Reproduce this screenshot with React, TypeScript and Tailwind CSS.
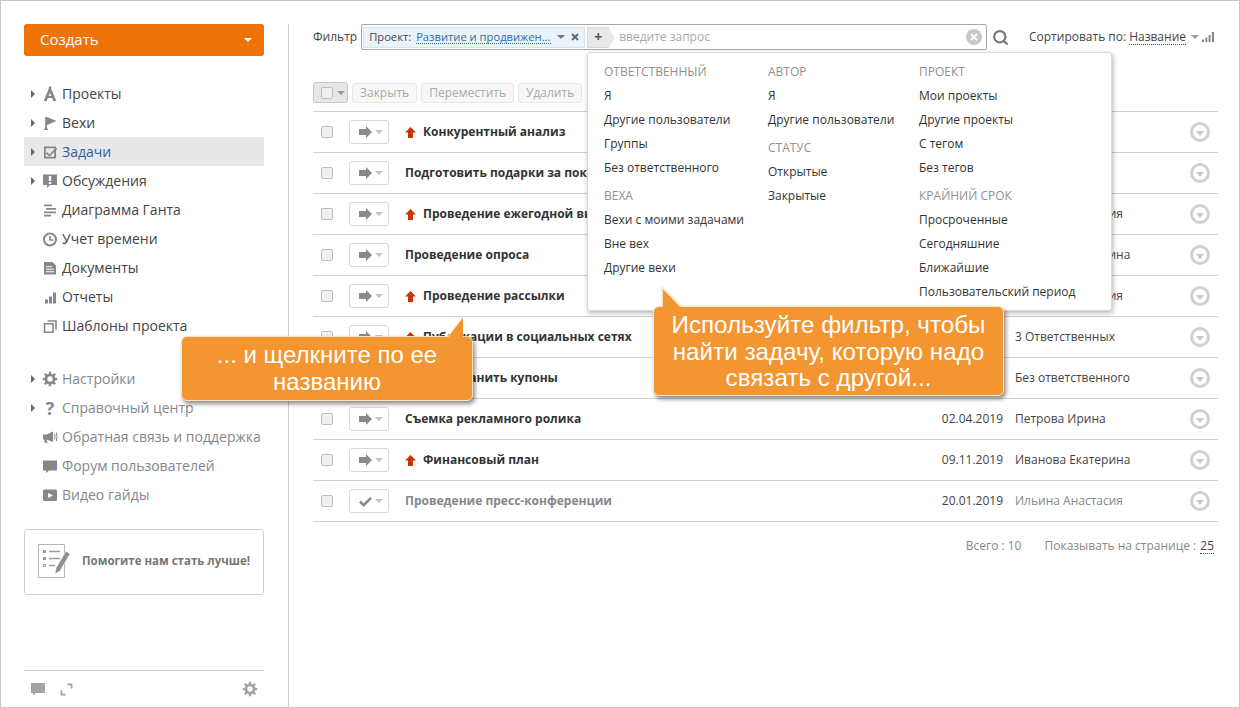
import { Search } from "lucide-react";

type Task = { name: string; up?: boolean; date?: string; who?: string; done?: boolean };

const tasks: Task[] = [
  { name: "Конкурентный анализ", up: true },
  { name: "Подготовить подарки за покупку" },
  { name: "Проведение ежегодной выставки", up: true, who: "Ильина Анастасия" },
  { name: "Проведение опроса", who: "Иванова Екатерина" },
  { name: "Проведение рассылки", up: true, who: "Ильина Анастасия" },
  { name: "Публикации в социальных сетях", up: true, who: "3 Ответственных" },
  { name: "Распространить купоны", who: "Без ответственного" },
  { name: "Съемка рекламного ролика", date: "02.04.2019", who: "Петрова Ирина" },
  { name: "Финансовый план", up: true, date: "09.11.2019", who: "Иванова Екатерина" },
  { name: "Проведение пресс-конференции", date: "20.01.2019", who: "Ильина Анастасия", done: true },
];

function NavIcon({ name }: { name: string }) {
  const c = "#83888d";
  const cls = "w-4 h-4 shrink-0";
  switch (name) {
    case "compass":
      return <svg viewBox="0 0 16 16" className={cls}><path d="M6.800 0.500h2.400v2.300l5 11.700-2.600 1-3.600-8.700-3.600 8.700-2.600-1 5-11.700z" fill={c} /><path d="M5 10h6l.8 2H4.200z" fill={c} /></svg>;
    case "flag":
      return <svg viewBox="0 0 16 16" className={cls}><path d="M3.200 2h1.800l9.500 4L5 10v3.300L6.500 15h-5L3.200 13.300z" fill={c} /></svg>;
    case "check":
      return <svg viewBox="0 0 16 16" className={cls}><path fillRule="evenodd" d="M2 2.500h12v12H2zM3.800 4.300v8.400h8.400V4.300z" fill={c} /><path d="M5 8l2.400 2.400L14 3.800l1.200 1.300-7.800 7.700L3.800 9.200z" fill={c} /></svg>;
    case "talk":
      return <svg viewBox="0 0 16 16" className={cls}><path fillRule="evenodd" d="M1 1.500h14v10.500H8l-3 3v-3H1zM6.800 3v5h2.400V3zM6.800 9v2h2.400V9z" fill={c} /></svg>;
    case "gantt":
      return <svg viewBox="0 0 16 16" className={cls}><path d="M2 2.500h8v1.800H2zM4 6h10v1.800H4zM2 9.500h12v1.800H2zM2 12.800h7v1.700H2z" fill={c} /></svg>;
    case "clock":
      return <svg viewBox="0 0 16 16" className={cls}><circle cx="8" cy="8.500" r="6" fill="none" stroke={c} strokeWidth="2" /><path d="M8 5V9h3.500" fill="none" stroke={c} strokeWidth="1.700" /></svg>;
    case "doc":
      return <svg viewBox="0 0 16 16" className={cls}><path fillRule="evenodd" d="M2 2h8.500L14 5.500V14.500H2zM4 6.200v1h6v-1zM4 8.700v1h8v-1zM4 11.200v1h8v-1z" fill={c} /></svg>;
    case "bars":
      return <svg viewBox="0 0 16 16" className={cls}><path d="M3 10.500h3v4H3zM7 7.500h3v7H7zM11 3.500h3v11h-3z" fill={c} /></svg>;
    case "copy":
      return <svg viewBox="0 0 16 16" className={cls}><path d="M5.500 3h8.500v8.500M2.500 5.800h8.500v8.500H2.500z" fill="none" stroke={c} strokeWidth="1.600" /></svg>;
    case "gear":
      return <Gear color={c} />;
    case "help":
      return <span className="w-4 text-center text-[18px] leading-4 font-bold text-[#83888d] shrink-0">?</span>;
    case "horn":
      return <svg viewBox="0 0 16 16" className={cls}><path d="M1 5.500h3.500L11 2.500v10.500L4.500 10.500l1 3.500H3l-1-3.500H1z" fill={c} /><path d="M12.500 5q1 2.700 0 5.500M14.300 3.500q1.300 4.200 0 8.500" fill="none" stroke={c} strokeWidth="1" /></svg>;
    case "bubble":
      return <svg viewBox="0 0 16 16" className={cls}><path d="M1 2.500h14V12.500H7l-3 2.500v-2.500H1z" fill={c} /></svg>;
    case "video":
      return <svg viewBox="0 0 16 16" className={cls}><path fillRule="evenodd" d="M2.500 2.500h11A1.500 1.500 0 0115 4v8.500a1.500 1.500 0 01-1.500 1.500h-11A1.500 1.500 0 011 12.500V4a1.500 1.500 0 011.500-1.500zM6 6v5l5-2.500z" fill={c} /></svg>;
    default:
      return <span className={cls} />;
  }
}

function Gear({ color, size = 16 }: { color: string; size?: number }) {
  return (
    <svg viewBox="0 0 16 16" width={size} height={size} className="shrink-0">
      <circle cx="8" cy="8" r="4" fill="none" stroke={color} strokeWidth="2.600" />
      <path d="M6.800 .8h2.400v2.700H6.800zM6.800 12.500h2.400v2.700H6.800zM.8 6.800h2.700v2.400H.8zM12.500 6.800h2.700v2.400h-2.700zM2 3.500L3.500 2l2.200 2L4 5.700zM14 3.500L12.500 2l-2.200 2L12 5.700zM2 12.500L3.500 14l2.200-2L4 10.300zM14 12.500L12.500 14l-2.200-2L12 10.300z" fill={color} />
    </svg>
  );
}

function NavRow({ icon, label, caret, active, muted }: { icon: string; label: string; caret?: boolean; active?: boolean; muted?: boolean }) {
  return (
    <div className={`h-[29px] flex items-center ${active ? "bg-[#e8e8e8]" : ""}`}>
      <span className="w-[6px] ml-[7px] mr-[5px] shrink-0">
        {caret && <span className="block w-0 h-0 border-y-[4px] border-y-transparent border-l-[4px] border-l-[#666]" />}
      </span>
      <NavIcon name={icon} />
      <span className={`ml-[4px] text-[14px] whitespace-nowrap ${active ? "text-[#2f5f9e]" : muted ? "text-[#83888d]" : "text-[#444]"}`}>{label}</span>
    </div>
  );
}

function ToolBtn({ label }: { label: string }) {
  return <div className="h-5 px-[7px] flex items-center text-[12px] text-[#a9a9a9] bg-[#f7f7f7] border border-[#e6e6e6] rounded-[3px]">{label}</div>;
}

function Check() {
  return <span className="block w-3 h-3 bg-[#f0f0f0] border border-[#bdbdbd] rounded-[2px] shrink-0" />;
}

function TaskRow({ t }: { t: Task }) {
  return (
    <div className="h-[41px] border-b border-[#d1d1d1] flex items-center">
      <span className="ml-2 mr-4"><Check /></span>
      <div className="w-10 h-[24px] border border-[#d8d8d8] rounded-[3px] flex items-center pl-[9px] gap-[3px] shrink-0">
        {t.done ? (
          <svg viewBox="0 0 14 12" className="w-[13px] h-[11px] shrink-0"><path d="M1 6l4 4 8-8" fill="none" stroke="#83888d" strokeWidth="2.800" /></svg>
        ) : (
          <svg viewBox="0 0 13 12" className="w-[13px] h-[12px] shrink-0"><path d="M0 3h7V0l6 6-6 6V9H0z" fill="#868a8e" /></svg>
        )}
        <span className="w-0 h-0 border-x-[4px] border-x-transparent border-t-[4px] border-t-[#c4c4c4]" />
      </div>
      <div className="ml-4 flex-1 flex items-center min-w-0">
        {t.up && (
          <svg viewBox="0 0 11 11" className="w-[11px] h-[11px] mr-[7px] shrink-0"><path d="M5.500 0L11 5.500H8V11H3V5.500H0z" fill="#c9340a" /></svg>
        )}
        <span className={`text-[12px] font-bold whitespace-nowrap ${t.done ? "text-[#83888d]" : "text-[#333]"}`}>{t.name}</span>
      </div>
      <span className="w-[80px] text-right text-[12px] text-[#444]">{t.date}</span>
      <span className={`ml-3 w-[175px] text-[12px] ${t.done ? "text-[#83888d]" : "text-[#444]"}`}>{t.who}</span>
      <span className="mr-[8px] w-5 h-5 rounded-full border-[3px] border-[#d0d0d0] flex items-center justify-center shrink-0">
        <span className="mt-[2px] w-0 h-0 border-x-[4px] border-x-transparent border-t-[5px] border-t-[#c8c8c8]" />
      </span>
    </div>
  );
}

function Group({ title, items, gap }: { title: string; items: string[]; gap?: boolean }) {
  return (
    <div className={gap ? "mt-[4px]" : ""}>
      <div className="h-6 flex items-center text-[12px] text-[#909090]">{title}</div>
      {items.map((s) => (
        <div key={s} className="h-6 flex items-center text-[12px] text-[#333] whitespace-nowrap">{s}</div>
      ))}
    </div>
  );
}

function FilterMenu() {
  return (
    <div className="absolute left-[586px] top-[51px] w-[525px] h-[259px] bg-white border border-[#d8d8d8] rounded-[3px] shadow-[1px_2px_5px_rgba(0,0,0,0.3)] pt-[7px] pl-4 flex">
      <div className="w-[164px]">
        <Group title="ОТВЕТСТВЕННЫЙ" items={["Я", "Другие пользователи", "Группы", "Без ответственного"]} />
        <Group title="ВЕХА" gap items={["Вехи с моими задачами", "Вне вех", "Другие вехи"]} />
      </div>
      <div className="w-[151px]">
        <Group title="АВТОР" items={["Я", "Другие пользователи"]} />
        <Group title="СТАТУС" gap items={["Открытые", "Закрытые"]} />
      </div>
      <div>
        <Group title="ПРОЕКТ" items={["Мои проекты", "Другие проекты", "С тегом", "Без тегов"]} />
        <Group title="КРАЙНИЙ СРОК" gap items={["Просроченные", "Сегодняшние", "Ближайшие", "Пользовательский период"]} />
      </div>
    </div>
  );
}

export default function App() {
  return (
    <div className="relative w-[1240px] h-[708px] overflow-hidden bg-white border border-[#c8c8c8] flex font-['Open_Sans',sans-serif]">
      {/* Sidebar */}
      <aside className="w-[287px] h-full pl-[23px] pr-[24px] pt-[23px] flex flex-col shrink-0">
        <div className="h-8 bg-[#ee7309] rounded-[3px] flex items-center justify-between pl-4 pr-3 pb-[2px] shrink-0">
          <span className="text-white text-[15px]">Создать</span>
          <span className="w-0 h-0 border-x-[4px] border-x-transparent border-t-[4px] border-t-white mt-[2px]" />
        </div>
        <nav className="mt-[23px]">
          <NavRow icon="compass" label="Проекты" caret />
          <NavRow icon="flag" label="Вехи" caret />
          <NavRow icon="check" label="Задачи" caret active />
          <NavRow icon="talk" label="Обсуждения" caret />
          <NavRow icon="gantt" label="Диаграмма Ганта" />
          <NavRow icon="clock" label="Учет времени" />
          <NavRow icon="doc" label="Документы" />
          <NavRow icon="bars" label="Отчеты" />
          <NavRow icon="copy" label="Шаблоны проекта" />
        </nav>
        <nav className="mt-[24px]">
          <NavRow icon="gear" label="Настройки" caret muted />
          <NavRow icon="help" label="Справочный центр" caret muted />
          <NavRow icon="horn" label="Обратная связь и поддержка" muted />
          <NavRow icon="bubble" label="Форум пользователей" muted />
          <NavRow icon="video" label="Видео гайды" muted />
        </nav>
        <div className="mt-[20px] h-[66px] border border-[#cfcfcf] rounded-[3px] flex items-center pl-[13px] gap-[11px] pb-[2px] shrink-0">
          <svg viewBox="0 0 33 34" className="w-[33px] h-[34px] shrink-0">
            <path d="M.5.500h26v33H.5z" fill="none" stroke="#b5b5b5" />
            <path d="M5 6h3v3H5zM5 13h3v3H5z" fill="#9a9a9a" />
            <path d="M5.500 20.500h2v2h-2z" fill="none" stroke="#9a9a9a" />
            <path d="M11 7.500h11M11 14.500h11M11 21.500h6" stroke="#9a9a9a" strokeWidth="1.500" />
            <path d="M28 7l4 3-10 17-5 3 1-6z" fill="#8e8e8e" stroke="#fff" strokeWidth=".6" />
          </svg>
          <span className="text-[11.500px] font-bold text-[#777] whitespace-nowrap">Помогите нам стать лучше!</span>
        </div>
        <div className="mt-auto border-t border-[#d1d1d1] h-[37px] flex items-center pl-[6px] pr-[6px] shrink-0">
          <svg viewBox="0 0 16 16" className="w-4 h-4"><path d="M1 2h14v10H6l-3 2.500V12H1z" fill="#a0a4a8" /></svg>
          <svg viewBox="0 0 14 14" className="w-[13px] h-[13px] ml-[14px]"><path d="M8 1.500h4.500V6M1.500 8v4.500H6" fill="none" stroke="#a0a4a8" strokeWidth="1.800" /></svg>
          <span className="ml-auto"><Gear color="#a0a4a8" /></span>
        </div>
      </aside>

      {/* Main */}
      <main className="flex-1 mt-[23px] border-l border-[#d1d1d1] pl-6 pr-[21px] min-w-0">
        <div className="h-[26px] flex items-center">
          <span className="text-[12px] text-[#444] mr-[4px]">Фильтр</span>
          <div className="w-[626px] h-[26px] border border-[#a8a8a8] rounded-[2px] flex items-center pl-[1px] pr-[4px] shrink-0">
            <div className="w-[222px] h-[21px] bg-[#eaf3fa] border border-[#d5e4ef] flex items-center pl-[5px] text-[11.200px] text-[#444] whitespace-nowrap shrink-0">
              <span>Проект:</span>
              <span className="ml-[5px] text-[#2f6ba8] border-b border-dotted border-[#2f6ba8] leading-[13px]">Развитие и продвижен...</span>
              <span className="ml-[6px] w-0 h-0 border-x-[4px] border-x-transparent border-t-[4px] border-t-[#777]" />
              <svg viewBox="0 0 8 8" className="ml-[6px] w-2 h-2"><path d="M1 1l6 6M7 1L1 7" stroke="#666" strokeWidth="1.800" /></svg>
            </div>
            <div className="relative ml-[2px] w-[22px] h-[21px] bg-[#e8e8e8] border border-[#d8d8d8] flex items-center justify-center text-[14px] font-bold leading-none text-[#555] shrink-0">
              +
              <span className="absolute left-[20px] top-0 w-0 h-0 border-y-[10px] border-y-transparent border-l-[7px] border-l-[#e8e8e8]" />
            </div>
            <span className="ml-[10px] text-[12px] text-[#a9a9a9]">введите запрос</span>
            <span className="ml-auto w-4 h-4 rounded-full bg-[#c8c8c8] flex items-center justify-center">
              <svg viewBox="0 0 8 8" className="w-2 h-2"><path d="M1 1l6 6M7 1L1 7" stroke="#fff" strokeWidth="1.800" /></svg>
            </span>
          </div>
          <Search size={17} strokeWidth={3} className="ml-[5px] text-[#777]" />
          <span className="ml-auto text-[12px] text-[#444] whitespace-nowrap">Сортировать по:</span>
          <span className="ml-[3px] text-[12px] text-[#444] border-b border-dotted border-[#444] leading-[15px]">Название</span>
          <span className="ml-[5px] w-0 h-0 border-x-[4px] border-x-transparent border-t-[4px] border-t-[#999]" />
          <svg viewBox="0 0 12 10" className="ml-[3px] mr-[4px] w-3 h-[10px]"><path d="M0 7.500h2V10H0zM3.300 5.500h2V10h-2zM6.600 3h2v7h-2zM9.900 0H12v10H9.900z" fill="#83888d" /></svg>
        </div>

        <div className="mt-[32px] h-[21px] flex items-center gap-[4px]">
          <div className="w-[35px] h-[21px] bg-[#e6e6e6] border border-[#c9c9c9] rounded-[3px] flex items-center pl-[7px] gap-[4px]">
            <Check />
            <span className="w-0 h-0 border-x-[4px] border-x-transparent border-t-[4px] border-t-[#999]" />
          </div>
          <ToolBtn label="Закрыть" />
          <ToolBtn label="Переместить" />
          <ToolBtn label="Удалить" />
        </div>

        <div className="mt-[8px] border-t border-[#d1d1d1]">
          {tasks.map((t) => (
            <TaskRow key={t.name} t={t} />
          ))}
        </div>

        <div className="mt-[15px] flex justify-end items-center text-[12px] text-[#888] pr-[4px]">
          <span>Всего : 10</span>
          <span className="ml-[23px]">Показывать на странице :</span>
          <span className="ml-[4px] text-[#444] border-b border-dotted border-[#444] leading-[14px]">25</span>
        </div>
      </main>

      <FilterMenu />

      {/* Callouts */}
      <div className="absolute left-[180px] top-[335px] w-[292px] h-[65px] bg-[#f39530] border border-[#fde3c3] rounded-[6px] shadow-[2px_3px_4px_rgba(0,0,0,0.45)] flex items-center justify-center text-center text-white text-[24px] leading-[27px] pb-[2px] font-['Liberation_Sans',sans-serif]">
        <span className="w-[260px]">... и щелкните по ее названию</span>
      </div>
      <svg viewBox="0 0 17 22" className="absolute left-[446px] top-[315px] w-[17px] h-[22px]">
        <path d="M16 1V22H0z" fill="#f39530" />
        <path d="M16 1L0.500 21" fill="none" stroke="#fde3c3" strokeWidth="1.200" />
      </svg>
      <div className="absolute left-[652px] top-[305px] w-[351px] h-[90px] bg-[#f39530] border border-[#fde3c3] rounded-[6px] shadow-[2px_3px_4px_rgba(0,0,0,0.45)] flex items-center justify-center text-center text-white text-[24.200px] leading-[26.500px] pt-[2px] font-['Liberation_Sans',sans-serif]">
        <span className="w-[340px]">Используйте фильтр, чтобы найти задачу, которую надо связать с другой...</span>
      </div>
      <svg viewBox="0 0 22 22" className="absolute left-[660px] top-[285px] w-[22px] h-[22px]">
        <path d="M1.500 2V22H20z" fill="#f39530" />
        <path d="M1 21V1.500L20 20" fill="none" stroke="#fde3c3" strokeWidth="1.400" />
      </svg>
    </div>
  );
}
